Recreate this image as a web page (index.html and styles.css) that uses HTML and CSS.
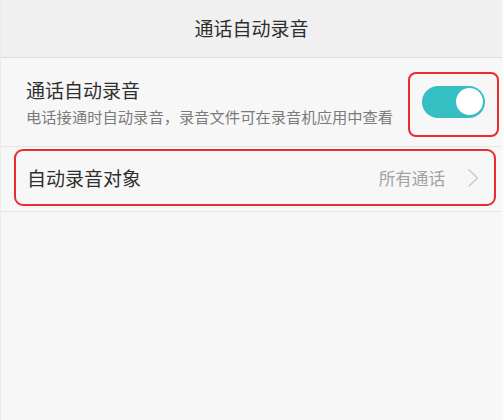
FILE: index.html
```html
<!DOCTYPE html>
<html lang="zh-CN">
<head>
<meta charset="utf-8">
<link rel="stylesheet" href="styles.css">
</head>
<body>
<div class="page">
  <header class="topbar">通话自动录音</header>
  <section class="row row-switch">
    <div class="texts">
      <div class="title">通话自动录音</div>
      <div class="desc">电话接通时自动录音，录音文件可在录音机应用中查看</div>
    </div>
    <div class="mark mark-switch">
      <div class="toggle"><span class="knob"></span></div>
    </div>
  </section>
  <section class="row row-link">
    <div class="mark mark-link">
      <span class="title">自动录音对象</span>
      <span class="value">所有通话</span>
      <svg class="chev" width="12" height="20" viewBox="0 0 12 20"><path d="M1.5 1.5 L10.5 10 L1.5 18.5" fill="none" stroke="#c9c9c9" stroke-width="1.4"/></svg>
    </div>
  </section>
</div>
</body>
</html>
```
FILE: styles.css
```css
html, body {
  margin: 0;
  padding: 0;
  height: 100%;
}
body {
  background: #f7f7f7;
  font-family: "Noto Sans CJK SC", "Noto Sans", sans-serif;
  color: #333;
}
.page {
  min-height: 100%;
  border-left: 1px solid #ececec;
  border-right: 2px solid #fbfbfb;
  box-sizing: border-box;
}
.topbar {
  height: 58px;
  background: #f0f0f0;
  border-bottom: 1px solid #dddddd;
  display: flex;
  align-items: center;
  justify-content: center;
  font-size: 19px;
  color: #2e2e2e;
  padding-bottom: 2px;
  box-sizing: border-box;
}
.row {
  border-bottom: 1px solid #e6e6e6;
}
.row-switch {
  height: 89px;
  box-sizing: border-box;
  display: flex;
  align-items: center;
  padding-left: 25px;
  padding-right: 3px;
}
.texts {
  flex: 1;
  min-width: 0;
  display: flex;
  flex-direction: column;
  gap: 3px;
  margin-top: 0px;
}
.title {
  font-size: 19px;
  line-height: 26px;
  color: #2f2f2f;
}
.desc {
  font-size: 15.3px;
  line-height: 21px;
  color: #7b7b7b;
  white-space: nowrap;
}
.mark {
  border: 2px solid #ea2b30;
  border-radius: 8px;
}
.mark-switch {
  flex-shrink: 0;
  width: 87px;
  height: 61px;
  display: flex;
  align-items: center;
  justify-content: center;
  margin-top: 4px;
}
.toggle {
  width: 63px;
  height: 32px;
  border-radius: 16px;
  background: #35bfc2;
  display: flex;
  align-items: center;
  justify-content: flex-end;
  padding-right: 2px;
  box-sizing: border-box;
  margin-top: -5px;
}
.knob {
  width: 27px;
  height: 27px;
  border-radius: 50%;
  background: #ffffff;
}
.row-link {
  height: 65px;
  box-sizing: border-box;
  padding: 2px 6px 5px 13px;
}
.mark-link {
  height: 100%;
  box-sizing: border-box;
  display: flex;
  align-items: center;
  padding-left: 11px;
  padding-right: 15px;
  border-radius: 9px;
}
.mark-link .title {
  flex: 1;
  font-size: 19px;
}
.value {
  font-size: 16.6px;
  color: #a2a2a2;
  margin-right: 22px;
}
.chev {
  display: block;
}
```
